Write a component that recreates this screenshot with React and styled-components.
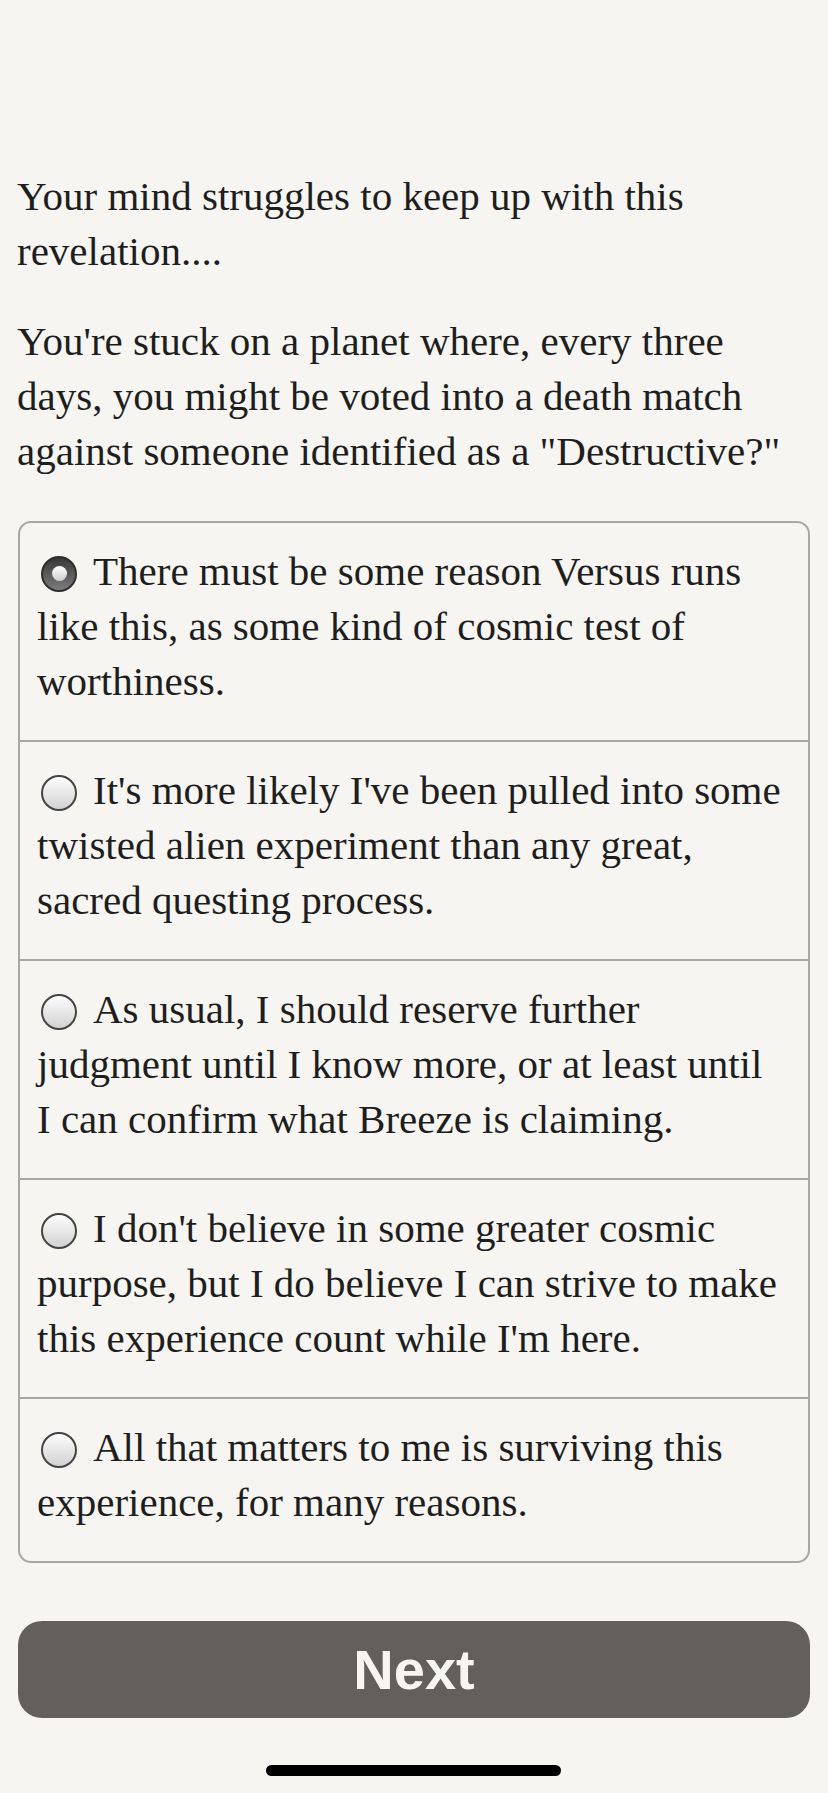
import React, { useState } from "react";
import styled, { createGlobalStyle } from "styled-components";

const GlobalStyle = createGlobalStyle`
  html, body {
    margin: 0;
    padding: 0;
    background: #f7f5f2;
  }
`;

const Page = styled.div`
  width: 828px;
  min-height: 1793px;
  box-sizing: border-box;
  padding: 169px 18px 0 17px;
  display: flex;
  flex-direction: column;
  font-family: "Liberation Serif", "Times New Roman", serif;
  color: #1e1e1e;
`;

const Paragraph = styled.p`
  margin: 0 0 ${(p) => p.$gap || 0}px;
  font-size: 41px;
  line-height: 55px;
  white-space: nowrap;
`;

const Choices = styled.div`
  margin-left: 1px;
  border: 2px solid #a7a7a7;
  border-radius: 13px;
  display: flex;
  flex-direction: column;
  overflow: hidden;
`;

const Choice = styled.label`
  display: block;
  padding: 21px 14px 31px 17px;
  font-size: 41px;
  line-height: 55px;
  white-space: nowrap;
  cursor: pointer;
  & + & {
    border-top: 2px solid #a7a7a7;
  }
`;

const Radio = styled.span`
  position: relative;
  top: -2px;
  display: inline-block;
  box-sizing: border-box;
  width: 36px;
  height: 36px;
  margin: 0 16px 0 4px;
  border-radius: 50%;
  vertical-align: middle;
  border: 2px solid ${(p) => (p.$checked ? "#2e2e2e" : "#444")};
  background: ${(p) =>
    p.$checked
      ? "linear-gradient(#383838, #7c7c7c)"
      : "linear-gradient(#fdfdfd, #d2d2d2)"};

  &::after {
    content: "";
    display: ${(p) => (p.$checked ? "block" : "none")};
    position: absolute;
    left: 50%;
    top: 50%;
    width: 15px;
    height: 15px;
    margin: -7.5px 0 0 -7.5px;
    border-radius: 50%;
    background: linear-gradient(#ffffff, #cfcfcf);
  }
`;

const NextButton = styled.button`
  margin-top: 58px;
  margin-left: 1px;
  height: 97px;
  border: none;
  border-radius: 24px;
  background: #625f5d;
  color: #f7f5f2;
  font-family: "Liberation Sans", Arial, sans-serif;
  font-weight: 700;
  font-size: 56px;
  cursor: pointer;
`;

const HomeBar = styled.div`
  align-self: center;
  width: 295px;
  height: 11px;
  margin-top: 47px;
  border-radius: 6px;
  background: #000;
`;

const options = [
  [
    "There must be some reason Versus runs",
    "like this, as some kind of cosmic test of",
    "worthiness.",
  ],
  [
    "It's more likely I've been pulled into some",
    "twisted alien experiment than any great,",
    "sacred questing process.",
  ],
  [
    "As usual, I should reserve further",
    "judgment until I know more, or at least until",
    "I can confirm what Breeze is claiming.",
  ],
  [
    "I don't believe in some greater cosmic",
    "purpose, but I do believe I can strive to make",
    "this experience count while I'm here.",
  ],
  [
    "All that matters to me is surviving this",
    "experience, for many reasons.",
  ],
];

const Lines = ({ lines }) =>
  lines.map((line, i) => (
    <React.Fragment key={i}>
      {i > 0 && <br />}
      {line}
    </React.Fragment>
  ));

const App = () => {
  const [selected, setSelected] = useState(0);

  return (
    <>
      <GlobalStyle />
      <Page>
        <Paragraph $gap={35}>
          <Lines lines={["Your mind struggles to keep up with this", "revelation...."]} />
        </Paragraph>
        <Paragraph $gap={42}>
          <Lines
            lines={[
              "You're stuck on a planet where, every three",
              "days, you might be voted into a death match",
              'against someone identified as a "Destructive?"',
            ]}
          />
        </Paragraph>
        <Choices>
          {options.map((lines, i) => (
            <Choice key={i} onClick={() => setSelected(i)}>
              <Radio $checked={selected === i} />
              <Lines lines={lines} />
            </Choice>
          ))}
        </Choices>
        <NextButton>Next</NextButton>
        <HomeBar />
      </Page>
    </>
  );
};

export default App;
